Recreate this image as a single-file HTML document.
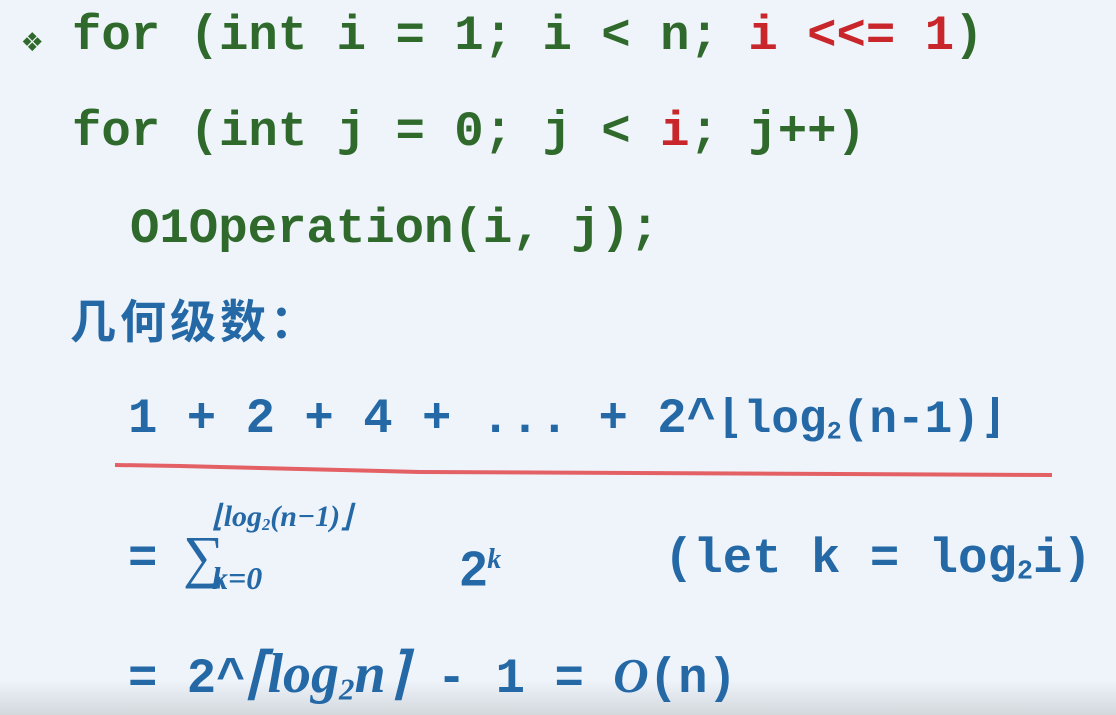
<!DOCTYPE html>
<html><head><meta charset="utf-8"><style>
html,body{margin:0;padding:0}
body{width:1116px;height:715px;overflow:hidden;position:relative;background:#eff4fb;}
.l{position:absolute;white-space:pre;font-family:"Liberation Mono",monospace;font-weight:bold;font-size:49px;line-height:49px}
.g{color:#2f6a2c}.r{color:#c8262a}.b{color:#2468a6}
.cj{font-family:"Noto Sans CJK SC",sans-serif;font-weight:bold;font-size:46px;line-height:46px;letter-spacing:4px}
.it{font-family:"Liberation Serif",serif;font-style:italic;font-weight:bold}
sub{font-size:0.55em;vertical-align:-0.25em}
.bot{position:absolute;left:0;top:680px;width:1116px;height:35px;background:linear-gradient(#eff4fb,#d3d8dd)}
</style></head><body>
<div class="bot"></div>
<div class="l g" style="left:22px;top:14px"><span style="font-size:34px">❖</span></div>
<div class="l g" style="left:72px;top:12px">for (int i = 1; i &lt; n; <span class="r">i &lt;&lt;= 1</span>)</div>
<div class="l g" style="left:72px;top:108px">for (int j = 0; j &lt; <span class="r">i</span>; j++)</div>
<div class="l g" style="left:130px;top:205px">O1Operation(i, j);</div>
<div class="l b cj" style="left:70px;top:296px">几何级数：</div>
<div class="l b" style="left:128px;top:395px">1 + 2 + 4 + ... + 2^<span style="font-size:46px">⌊log<sub>2</sub>(n-1)⌋</span></div>
<svg style="position:absolute;left:0;top:0" width="1116" height="715"><path d="M115 465 L180 466 L300 469 L420 472 L1052 475" stroke="#e0454a" stroke-width="4" fill="none" opacity="0.85"/></svg>
<div class="l b" style="left:128px;top:535px">=</div>
<div class="l b" style="left:183px;top:528px;font-family:'Liberation Serif';font-size:58px;line-height:58px;font-weight:normal">∑</div>
<div class="l b it" style="left:212px;top:502px;font-size:30px;line-height:30px">⌊log<sub>2</sub>(n−1)⌋</div>
<div class="l b it" style="left:212px;top:562px;font-size:32px;line-height:32px">k=0</div>
<div class="l b" style="left:460px;top:535px;font-family:'Liberation Sans';">2<sup class="it" style="font-size:28px">k</sup></div>
<div class="l b" style="left:664px;top:535px">(let k = log<sub>2</sub>i)</div>
<div class="l b" style="left:128px;top:650px">= 2^<span class="it" style="font-size:56px">⌈log<sub>2</sub>n⌉</span> - 1 = <span class="it">O</span>(n)</div>
</body></html>
